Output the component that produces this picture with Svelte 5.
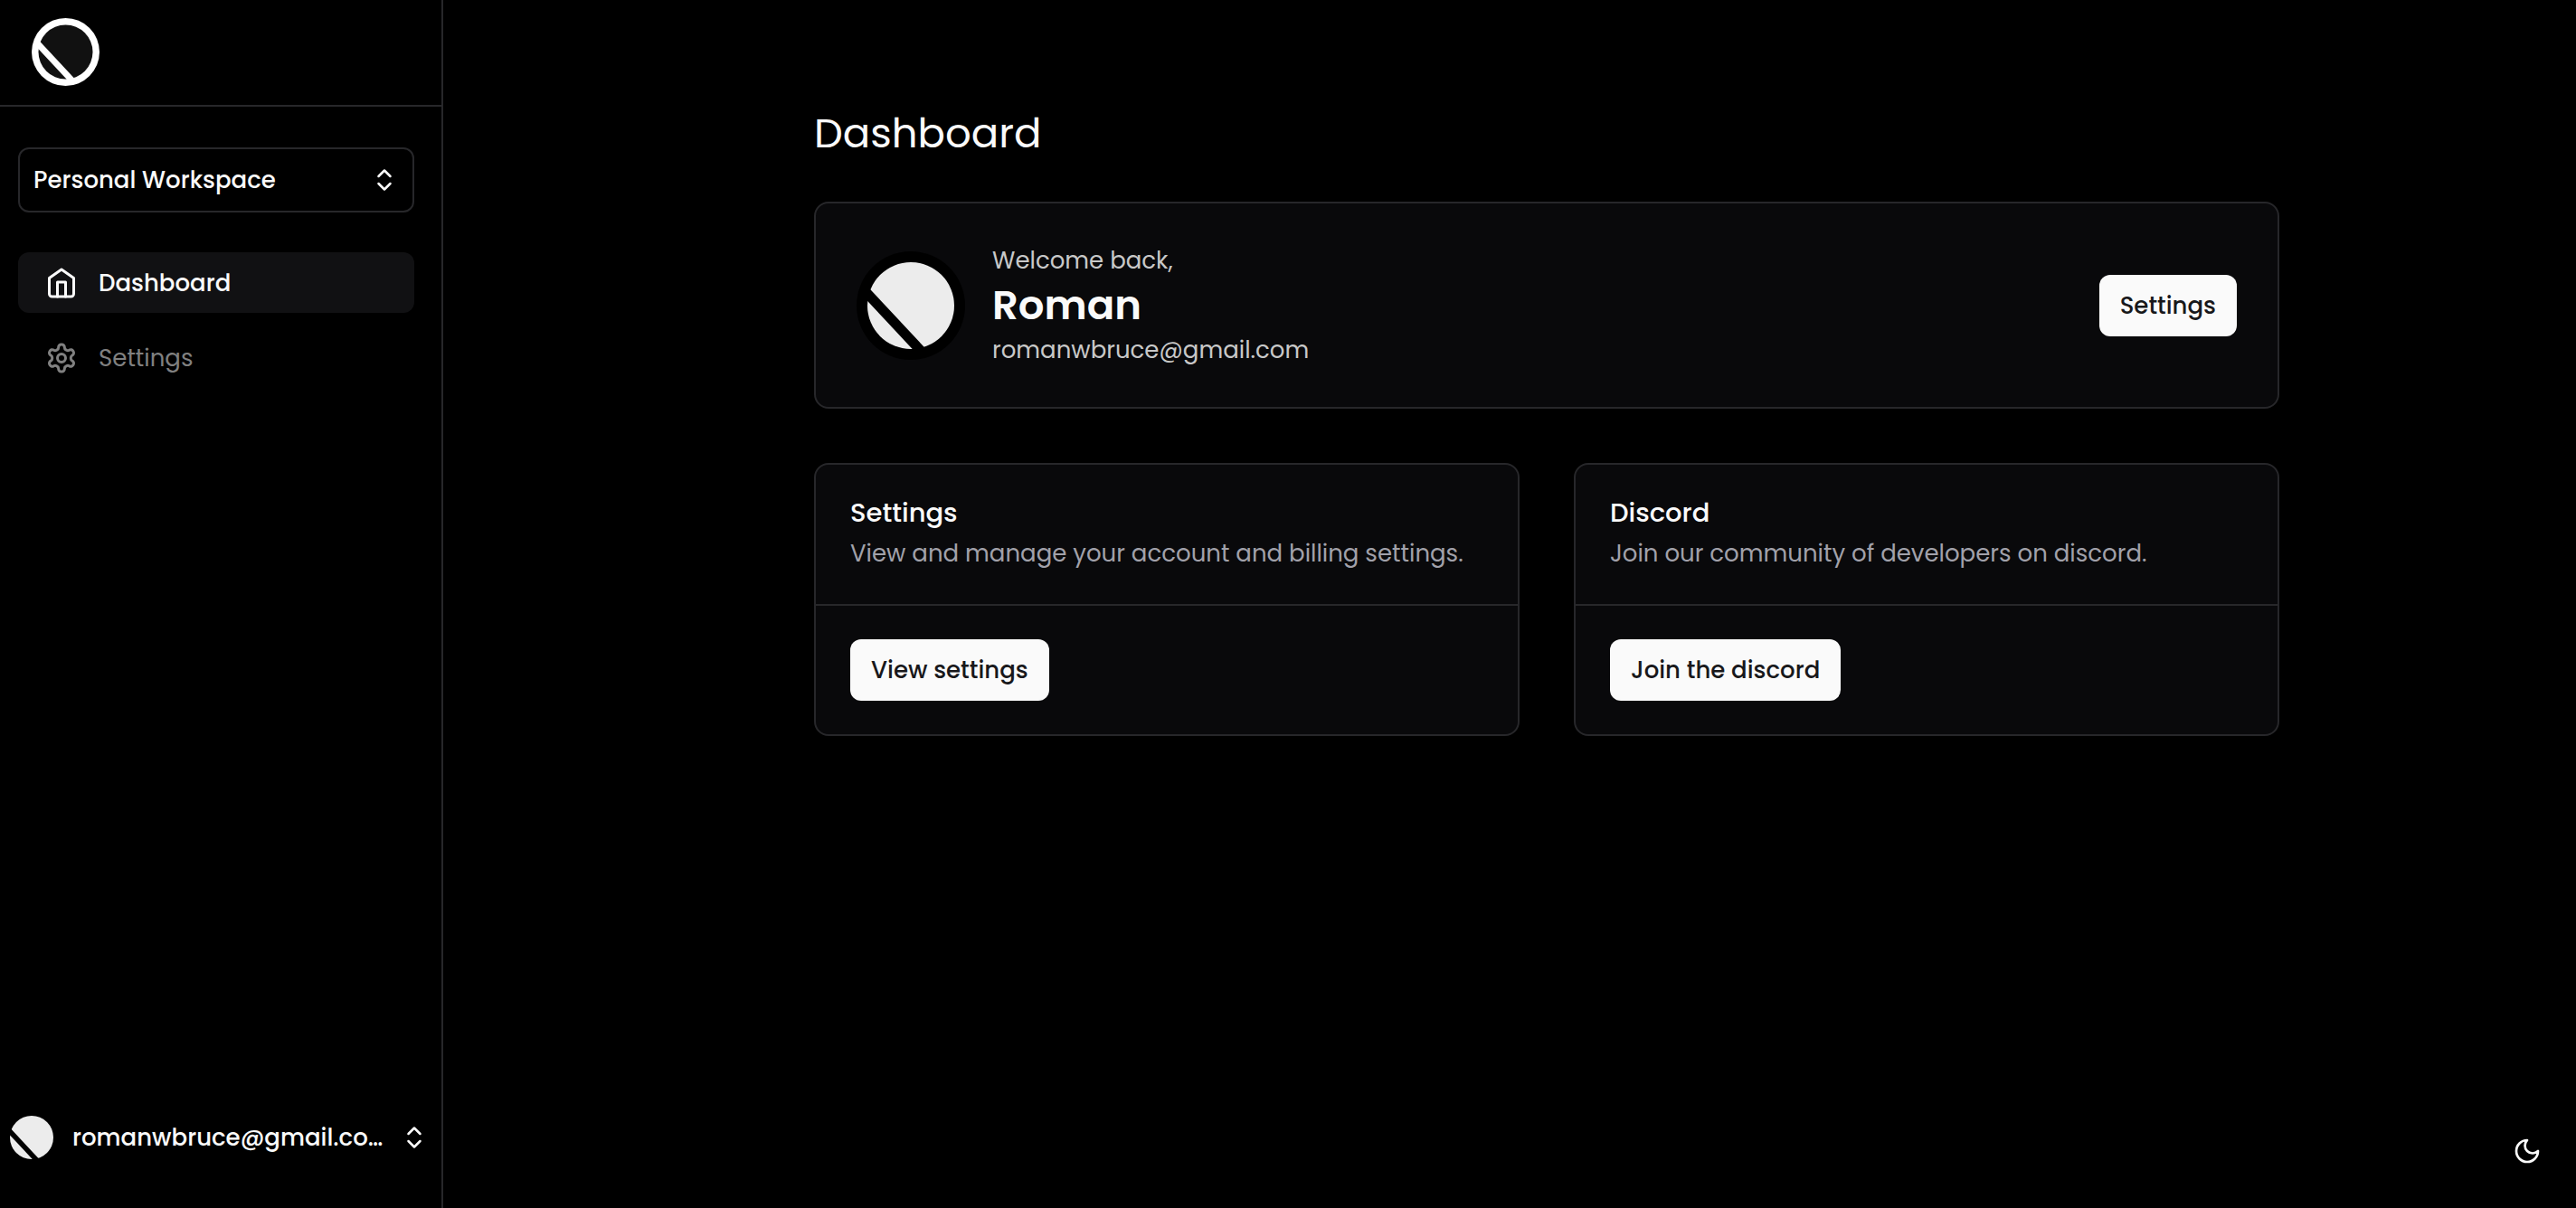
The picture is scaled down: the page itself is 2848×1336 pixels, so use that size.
<script>
  const email = 'romanwbruce@gmail.com';
  const cards = [
    { title: 'Settings', text: 'View and manage your account and billing settings.', action: 'View settings' },
    { title: 'Discord', text: 'Join our community of developers on discord.', action: 'Join the discord' }
  ];
</script>

{#snippet chevrons()}
  <svg class="chevrons" viewBox="0 0 18 26" aria-hidden="true">
    <path d="M2.500 9 9 2.500 15.500 9M2.500 17 9 23.500 15.500 17" />
  </svg>
{/snippet}

{#snippet mark(kind)}
  <svg class="mark {kind}" viewBox="0 0 120 120" aria-hidden="true">
    <circle class="ring" cx="60" cy="60" r="60" />
    <circle class="disc" cx="60" cy="60" r="48" />
    <path class="slash" d="M9 43.500 72 111" />
  </svg>
{/snippet}

<div class="app">
  <aside>
    <header>{@render mark('brand')}</header>
    <div class="side">
      <button class="workspace"><span>Personal Workspace</span>{@render chevrons()}</button>
      <nav>
        <a href="#dashboard" class="active" aria-current="page">
          <svg viewBox="0 0 36 36" aria-hidden="true">
            <path d="M4.500 12.500 18 3l13.500 9.500V30a3 3 0 0 1-3 3h-21a3 3 0 0 1-3-3Z" />
            <path d="M13.500 33V17h9v16" />
          </svg>
          Dashboard
        </a>
        <a href="#settings">
          <svg viewBox="0 0 24 24" class="gear" aria-hidden="true">
            <path d="M12.220 2h-.440a2 2 0 0 0-2 2v.180a2 2 0 0 1-1 1.730l-.430.250a2 2 0 0 1-2 0l-.150-.080a2 2 0 0 0-2.730.730l-.220.380a2 2 0 0 0 .730 2.730l.150.100a2 2 0 0 1 1 1.720v.510a2 2 0 0 1-1 1.740l-.150.090a2 2 0 0 0-.730 2.730l.220.380a2 2 0 0 0 2.730.730l.150-.080a2 2 0 0 1 2 0l.430.250a2 2 0 0 1 1 1.730V20a2 2 0 0 0 2 2h.440a2 2 0 0 0 2-2v-.180a2 2 0 0 1 1-1.730l.430-.250a2 2 0 0 1 2 0l.150.080a2 2 0 0 0 2.730-.730l.220-.390a2 2 0 0 0-.730-2.730l-.150-.080a2 2 0 0 1-1-1.740v-.500a2 2 0 0 1 1-1.740l.150-.090a2 2 0 0 0 .730-2.730l-.220-.380a2 2 0 0 0-2.730-.730l-.150.080a2 2 0 0 1-2 0l-.430-.250a2 2 0 0 1-1-1.730V4a2 2 0 0 0-2-2z" />
            <circle cx="12" cy="12" r="3" />
          </svg>
          Settings
        </a>
      </nav>
    </div>
    <button class="account">{@render mark('avatar')}<span>{email}</span>{@render chevrons()}</button>
  </aside>

  <main>
    <div class="content">
      <h1>Dashboard</h1>
      <section class="card welcome">
        {@render mark('avatar')}
        <div class="who">
          <p>Welcome back,</p>
          <h2>Roman</h2>
          <p>{email}</p>
        </div>
        <button class="primary">Settings</button>
      </section>
      <div class="grid">
        {#each cards as card}
          <section class="card">
            <div class="head">
              <h3>{card.title}</h3>
              <p>{card.text}</p>
            </div>
            <div class="foot"><button class="primary">{card.action}</button></div>
          </section>
        {/each}
      </div>
    </div>
  </main>

  <button class="theme" aria-label="Toggle theme">
    <svg viewBox="0 0 24 24" aria-hidden="true"><path d="M12 3a6 6 0 0 0 9 9 9 9 0 1 1-9-9Z" /></svg>
  </button>
</div>

<style>
  :global(body) {
    background: #000;
  }
  .app {
    display: flex;
    min-height: 100vh;
    font: 400 26px/40px Poppins, Inter, sans-serif;
    color: #fafafa;
  }
  h1, h2, h3, p {
    margin: 0;
  }
  button {
    font: inherit;
    color: inherit;
    background: none;
    border: 0;
    padding: 0;
    cursor: pointer;
  }
  svg {
    flex: none;
    fill: none;
    stroke: currentColor;
    stroke-width: 3;
    stroke-linecap: round;
    stroke-linejoin: round;
  }
  aside {
    box-sizing: border-box;
    width: 490px;
    flex: none;
    display: flex;
    flex-direction: column;
    border-right: 2px solid #27272a;
  }
  header {
    display: flex;
    padding: 20px 35px 21px;
    border-bottom: 2px solid #27272a;
  }
  .side {
    padding: 45px 30px 0 20px;
  }
  .workspace {
    box-sizing: border-box;
    width: 100%;
    height: 72px;
    display: flex;
    align-items: center;
    justify-content: space-between;
    padding: 0 22px 0 15px;
    border: 2px solid #27272a;
    border-radius: 12px;
  }
  .workspace, nav a.active, .account {
    font-weight: 500;
  }
  .chevrons {
    width: 18px;
    height: 26px;
    stroke-width: 2.5;
  }
  nav {
    display: flex;
    flex-direction: column;
    gap: 16px;
    padding-top: 44px;
  }
  nav a {
    display: flex;
    align-items: center;
    gap: 23px;
    height: 67px;
    padding: 0 30px;
    border-radius: 12px;
    color: #808080;
    text-decoration: none;
  }
  nav a.active {
    background: #111113;
    color: #fafafa;
  }
  nav svg {
    width: 36px;
    height: 36px;
  }
  .gear {
    stroke-width: 2;
  }
  .account {
    display: flex;
    align-items: center;
    margin-top: auto;
    padding: 0 21px 48px 5px;
  }
  .account span {
    flex: 1;
    min-width: 0;
    margin: 0 20px 0 15px;
    overflow: hidden;
    text-overflow: ellipsis;
    white-space: nowrap;
    text-align: left;
  }
  .mark {
    stroke: none;
  }
  .brand {
    width: 75px;
    height: 75px;
  }
  .brand .ring {
    fill: #fff;
  }
  .brand .disc {
    fill: #111;
  }
  .slash {
    stroke-width: 11;
    stroke-linecap: butt;
  }
  .brand .slash {
    stroke: #fff;
  }
  .avatar {
    width: 60px;
    height: 60px;
  }
  .avatar .ring {
    fill: #000;
  }
  .avatar .disc {
    fill: #ececec;
  }
  .avatar .slash {
    stroke: #000;
  }
  main {
    flex: 1;
    display: flex;
    justify-content: center;
    padding: 112px 0 112px 82px;
  }
  .content {
    flex: 0 1 1620px;
    min-width: 0;
  }
  h1 {
    font-size: 45px;
    line-height: 72px;
    font-weight: 400;
    margin-bottom: 39px;
  }
  .card {
    background: #09090b;
    border: 2px solid #27272a;
    border-radius: 16px;
  }
  .welcome {
    display: flex;
    align-items: center;
    gap: 30px;
    padding: 42px 45px;
    margin-bottom: 60px;
  }
  .welcome .avatar {
    width: 120px;
    height: 120px;
  }
  .who {
    flex: 1;
    color: #c8c8c8;
  }
  .who p {
    line-height: 42px;
  }
  h2 {
    font-size: 45px;
    line-height: 57px;
    font-weight: 600;
    color: #fafafa;
  }
  .primary {
    height: 68px;
    padding: 0 23px;
    border-radius: 12px;
    background: #fafafa;
    color: #18181b;
    font-weight: 500;
  }
  .grid {
    display: grid;
    grid-template-columns: 1fr 1fr;
    gap: 60px;
  }
  .head {
    padding: 31px 38px 33px;
    border-bottom: 2px solid #27272a;
  }
  .head p {
    color: #a1a1aa;
    line-height: 46px;
  }
  h3 {
    font-size: 29px;
    line-height: 44px;
    font-weight: 500;
  }
  .foot {
    display: flex;
    padding: 37px 38px;
  }
  .theme {
    position: fixed;
    right: 38px;
    bottom: 47px;
    display: flex;
  }
  .theme svg {
    width: 32px;
    height: 32px;
    stroke-width: 2;
  }
</style>
